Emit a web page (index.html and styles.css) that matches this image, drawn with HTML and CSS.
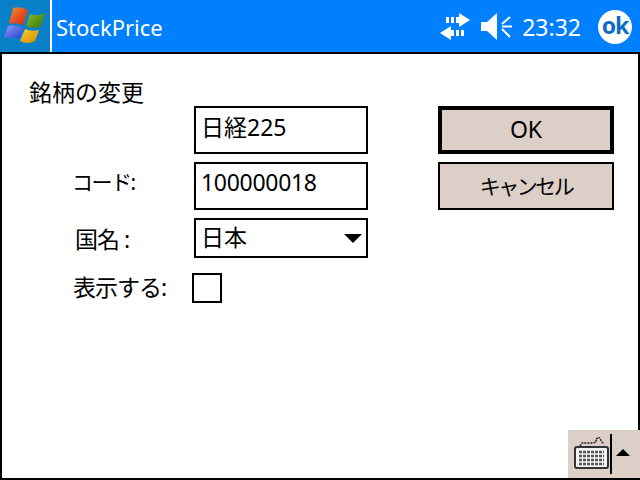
FILE: index.html
```html
<!DOCTYPE html>
<html lang="ja">
<head>
    <meta charset="UTF-8">
    <title>StockPrice</title>
    <link rel="stylesheet" href="styles.css">
</head>
<body>
    <div class="title-bar">
        <div class="start-button">
            <svg width="46" height="42" viewBox="0 0 46 42">
                <defs>
                    <linearGradient id="flag-red" x1="0" y1="0" x2="1" y2="1"><stop offset="0" stop-color="#e8a030"/><stop offset="0.5" stop-color="#e85020"/><stop offset="1" stop-color="#c83010"/></linearGradient>
                    <linearGradient id="flag-green" x1="0" y1="0" x2="1" y2="1"><stop offset="0" stop-color="#90c028"/><stop offset="1" stop-color="#2f7010"/></linearGradient>
                    <linearGradient id="flag-blue" x1="0" y1="0" x2="1" y2="1"><stop offset="0" stop-color="#90a0f8"/><stop offset="1" stop-color="#2038d0"/></linearGradient>
                    <linearGradient id="flag-yellow" x1="0" y1="0" x2="1" y2="1"><stop offset="0" stop-color="#f8d030"/><stop offset="1" stop-color="#d88800"/></linearGradient>
                </defs>
                <path d="M11 3 Q18 1 26 5 L21 20 Q14 17 7 19 Z" fill="url(#flag-red)"/>
                <path d="M28 9 Q35 12 43 8 L39 21 Q31 25 24 21 Z" fill="url(#flag-green)"/>
                <path d="M6 21 Q13 19 21 23 L17 34 Q9 31 2 33 Z" fill="url(#flag-blue)"/>
                <path d="M23 24 Q29 27 37 25 L33 36 Q26 40 18 36 Z" fill="url(#flag-yellow)"/>
            </svg>
        </div>
        <div class="app-title">StockPrice</div>
        <div class="tray">
            <svg class="tray-icon" width="32" height="28" viewBox="0 0 32 28">
                <path d="M20 0 L31 7 L20 14 L20 10 L17 10 L17 4 L20 4 Z M12 4 H15 V10 H12 Z M7 4 H10 V10 H7 Z" fill="#fff"/>
                <path d="M12 13 L1 20 L12 27 L12 23 L15 23 L15 17 L12 17 Z M17 17 H20 V23 H17 Z M22 17 H25 V23 H22 Z" fill="#fff"/>
            </svg>
            <svg class="tray-icon" width="32" height="28" viewBox="0 0 32 28">
                <path d="M0 9 H6 L16 0 V27 L6 18 H0 Z" fill="#fff"/>
                <path d="M21 11 L29 4 M21 13.5 H31 M21 16 L29 24" stroke="#fff" stroke-width="2" fill="none"/>
            </svg>
            <span class="clock">23:32</span>
            <span class="ok-badge">ok</span>
        </div>
    </div>

    <div class="dialog">
        <div class="form-side">
            <div class="dialog-heading">銘柄の変更</div>
            <div class="form-row">
                <span class="field-label"></span>
                <div class="text-box name-box">日経225</div>
            </div>
            <div class="form-row">
                <span class="field-label code-label">コード:</span>
                <div class="text-box code-box">100000018</div>
            </div>
            <div class="form-row">
                <span class="field-label country-label">国名 :</span>
                <div class="combo-box">
                    <span>日本</span>
                    <span class="combo-arrow"></span>
                </div>
            </div>
            <div class="form-row check-row">
                <span class="field-label show-label">表示する:</span>
                <span class="check-box"></span>
            </div>
        </div>
        <div class="button-side">
            <div class="dlg-button default-button">OK</div>
            <div class="dlg-button cancel-button">キャンセル</div>
        </div>
    </div>

    <div class="sip-button">
        <svg width="36" height="34" viewBox="0 0 36 34">
            <path d="M6 9 L8 6 H19 L22 5 V2 L25 0 L28 5 L30 7" stroke="#222" stroke-width="1.5" stroke-dasharray="2 1" fill="none"/>
            <rect x="1" y="10" width="33" height="21" rx="2" fill="#f4f4f4" stroke="#333" stroke-width="2"/>
            <path d="M5 15 H30 M5 19 H30 M5 23 H30 M5 27 H30" stroke="#555" stroke-width="2.5" stroke-dasharray="3 1" fill="none"/>
        </svg>
        <span class="sip-divider"></span>
        <span class="sip-arrow"></span>
    </div>
</body>
</html>
```

FILE: styles.css
```css
html, body {
    margin: 0;
    padding: 0;
}
body {
    width: 640px;
    height: 480px;
    position: relative;
    overflow: hidden;
    display: flex;
    flex-direction: column;
    font-family: "Noto Sans", "Noto Sans CJK JP", sans-serif;
    font-size: 23px;
    color: #000;
    background-color: #fff;
}
.title-bar {
    height: 52px;
    flex-shrink: 0;
    display: flex;
    align-items: center;
    background-color: #0080ff;
    color: #fff;
}
.start-button {
    width: 50px;
    height: 52px;
    display: flex;
    align-items: center;
    justify-content: center;
    background-color: #0a80c8;
    border-right: 2px solid #fff;
}
.app-title {
    margin-left: 4px;
    font-size: 22px;
    padding-top: 2px;
}
.tray {
    margin-left: auto;
    display: flex;
    align-items: center;
    padding-top: 2px;
}
.tray-icon {
    margin-right: 10px;
}
.clock {
    font-size: 23px;
    margin-left: -1px;
}
.ok-badge {
    width: 34px;
    height: 34px;
    margin: 0 8px 0 17px;
    border-radius: 50%;
    background-color: #fff;
    color: #0a6cc8;
    font-size: 23px;
    font-weight: bold;
    line-height: 31px;
    text-align: center;
    letter-spacing: -1px;
}
.dialog {
    flex: 1;
    display: flex;
    border: 2px solid #000;
    padding: 24px 24px 0 27px;
}
.form-side {
    width: 341px;
}
.dialog-heading {
    height: 28px;
    line-height: 28px;
}
.form-row {
    display: flex;
    align-items: center;
    margin-bottom: 8px;
}
.field-label {
    width: 165px;
    padding-left: 44px;
    box-sizing: border-box;
    padding-bottom: 4px;
}
.code-label {
    font-size: 21px;
    letter-spacing: -1.5px;
    padding-bottom: 10px;
    padding-left: 43px;
}
.country-label {
    padding-left: 46px;
    padding-bottom: 0;
    letter-spacing: -1px;
}
.show-label {
    letter-spacing: -1px;
}
.text-box, .combo-box {
    width: 174px;
    height: 48px;
    box-sizing: border-box;
    border: 2px solid #000;
    padding: 0 0 9px 5px;
    display: flex;
    align-items: center;
}
.code-box {
    letter-spacing: -0.3px;
}
.combo-box {
    height: 40px;
    padding: 0 4px 4px 5px;
    justify-content: space-between;
}
.combo-arrow {
    margin-top: 4px;
    border-left: 9px solid transparent;
    border-right: 9px solid transparent;
    border-top: 9px solid #000;
}
.check-row {
    margin-top: 11px;
}
.check-box {
    width: 30px;
    height: 30px;
    box-sizing: border-box;
    border: 2px solid #000;
    margin-left: -2px;
}
.button-side {
    margin: 28px 0 0 68px;
    display: flex;
    flex-direction: column;
    gap: 8px;
}
.dlg-button {
    width: 176px;
    height: 48px;
    box-sizing: border-box;
    border: 2px solid #000;
    padding-bottom: 2px;
    background-color: #dccfc8;
    display: flex;
    align-items: center;
    justify-content: center;
}
.default-button {
    border-width: 4px;
}
.cancel-button {
    font-size: 21px;
    letter-spacing: -2.5px;
}
.sip-button {
    position: absolute;
    right: 0;
    bottom: 2px;
    width: 72px;
    height: 48px;
    background-color: #dccfc8;
    display: flex;
    align-items: center;
}
.sip-button svg {
    margin-left: 6px;
}
.sip-divider {
    width: 2px;
    height: 40px;
    background-color: #000;
}
.sip-arrow {
    margin-left: 4px;
    margin-bottom: 4px;
    border-left: 7px solid transparent;
    border-right: 7px solid transparent;
    border-bottom: 7px solid #000;
}
```
